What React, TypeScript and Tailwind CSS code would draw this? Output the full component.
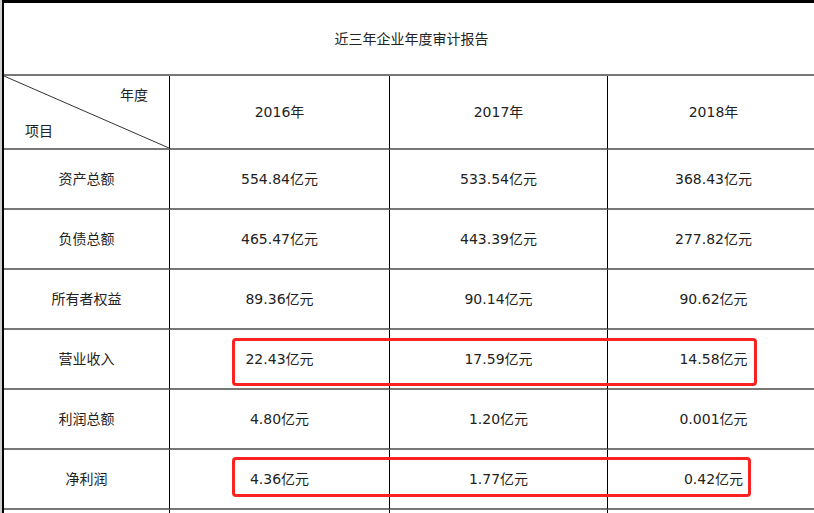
import React from "react";

const rows: [string, string, string, string][] = [
  ["资产总额", "554.84亿元", "533.54亿元", "368.43亿元"],
  ["负债总额", "465.47亿元", "443.39亿元", "277.82亿元"],
  ["所有者权益", "89.36亿元", "90.14亿元", "90.62亿元"],
  ["营业收入", "22.43亿元", "17.59亿元", "14.58亿元"],
  ["利润总额", "4.80亿元", "1.20亿元", "0.001亿元"],
  ["净利润", "4.36亿元", "1.77亿元", "0.42亿元"],
  ["", "", "", ""],
];

const cell =
  "flex items-center justify-center border-b-2 border-b-[#777] border-r border-r-black";
const lastCell = "flex items-center justify-center border-b-2 border-b-[#777]";

export default function App() {
  return (
    <div
      className="relative flex h-[513px] w-[814px] overflow-hidden bg-white text-[14px] leading-[16px] text-[#222]"
      style={{ fontFamily: '"DejaVu Sans", "Noto Sans CJK SC", sans-serif' }}
    >
      <div className="w-[2px] shrink-0 bg-[#cfcfcf]" />
      <div className="w-[817px] shrink-0 border-l-2 border-t-[3px] border-black">
        <div className="flex h-[73px] items-center justify-center border-b-2 border-b-[#777]">
          近三年企业年度审计报告
        </div>
        <div className="grid grid-cols-[166px_220px_218px_211px]">
          <div className="relative flex h-[74px] flex-col justify-between border-b-2 border-r border-b-[#777] border-r-black">
            <svg
              className="absolute left-0 top-0"
              width="165"
              height="72"
              viewBox="0 0 165 72"
            >
              <line x1="0" y1="0" x2="165" y2="72" stroke="#333" strokeWidth="1" />
            </svg>
            <div className="self-end pr-[21px] pt-[11px]">年度</div>
            <div className="self-start pb-[9px] pl-[21px]">项目</div>
          </div>
          <div className={`${cell} h-[74px]`}>2016年</div>
          <div className={`${cell} h-[74px]`}>2017年</div>
          <div className={`${lastCell} h-[74px]`}>2018年</div>
          {rows.map((r, i) => (
            <React.Fragment key={i}>
              <div className={`${cell} h-[60px]`}>{r[0]}</div>
              <div className={`${cell} h-[60px]`}>{r[1]}</div>
              <div className={`${cell} h-[60px]`}>{r[2]}</div>
              <div className={`${lastCell} h-[60px]`}>{r[3]}</div>
            </React.Fragment>
          ))}
        </div>
      </div>
      <div className="absolute left-[232px] top-[338px] h-[48px] w-[525px] rounded-[4px] border-[3px] border-[#fb2222]" />
      <div className="absolute left-[232px] top-[457px] h-[40px] w-[519px] rounded-[4px] border-[3px] border-[#fb2222]" />
    </div>
  );
}
